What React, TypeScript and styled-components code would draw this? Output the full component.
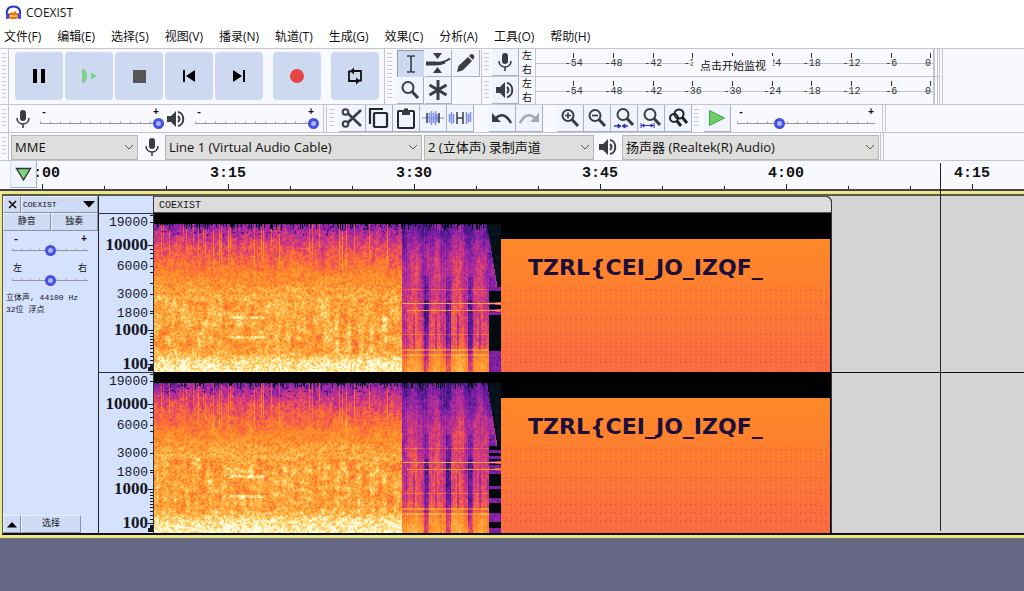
import React, { useMemo } from 'react';
import styled, { createGlobalStyle, css } from 'styled-components';

const ui = '"Open Sans", "Noto Sans CJK SC", sans-serif';
const mono = '"Liberation Mono", "Noto Sans CJK SC", monospace';

const GlobalStyle = createGlobalStyle`
  *, *::before, *::after { box-sizing: border-box; }
  body { margin: 0; background: #656685; color: #111; font-family: ${ui}; font-size: 12px; }
  button, input, select { font: inherit; color: inherit; margin: 0; padding: 0; border: 0; border-radius: 0; background: none; }
  svg { display: block; flex: none; }
`;

const TitleBar = styled.header`
  display: flex;
  align-items: center;
  gap: 4px;
  height: 25px;
  padding-left: 5px;
  background: #fff;
`;

const Title = styled.h1`
  margin: 0;
  font-size: 12px;
  font-weight: 400;
  line-height: 16px;
`;

const MenuBar = styled.nav`
  display: flex;
  gap: 16px;
  height: 23px;
  padding-left: 4px;
  background: #fff;
`;

const MenuItem = styled.button`
  font-size: 12px;
  line-height: 24px;
  white-space: nowrap;
`;

const ToolRow = styled.div<{ $h: number }>`
  display: flex;
  height: ${(p) => p.$h}px;
  border-top: 1px solid #c6c6c8;
  background: #f8f9fe;
  overflow: hidden;
`;

const Grip = styled.div<{ $line?: boolean }>`
  flex: none;
  width: 9px;
  padding: 4px 2px;
  background: repeating-linear-gradient(#c9cacd 0 1px, transparent 1px 4px) content-box;
  border-right: ${(p) => (p.$line ? '1px solid #c6c6c8' : '0')};
`;

const EndLines = styled.div`
  flex: none;
  width: 4px;
  border: solid #c6c6c8;
  border-width: 0 1px;
`;

const Transport = styled.div`
  display: flex;
  gap: 2px;
  width: 376px;
  padding: 3px 6px;
  border-right: 1px solid #c6c6c8;
`;

const BigButton = styled.button<{ $gap?: number }>`
  display: grid;
  place-items: center;
  flex: none;
  width: 48px;
  height: 48px;
  margin-left: ${(p) => p.$gap ?? 0}px;
  border-radius: 4px;
  background: #cdd9f0;
`;

const ToolGrid = styled.div`
  display: grid;
  grid-template-columns: repeat(3, 28px);
  grid-template-rows: repeat(2, 27px);
  border-right: 1px solid #c6c6c8;
`;

const IconButton = styled.button<{ $active?: boolean }>`
  display: grid;
  place-items: center;
  flex: none;
  width: 27px;
  height: 27px;
  background: ${(p) => (p.$active ? '#ccd9f1' : '#f0f4ff')};
  border: solid ${(p) => (p.$active ? '#8d97ad' : '#a9b0c0')};
  border-width: ${(p) => (p.$active ? '1px 0 0 1px' : '0 1px 1px 0')};
`;

const Meters = styled.div`
  display: grid;
  grid-template-rows: repeat(2, 28px);
  width: 457px;
`;

const MeterRow = styled.div`
  display: grid;
  grid-template-columns: 10px 27px 16px 1fr 5px;
  border-bottom: 1px solid #c6c6c8;
`;

const Channels = styled.div`
  display: grid;
  place-items: center;
  font-size: 10px;
  line-height: 13px;
`;

const MeterScale = styled.div`
  position: relative;
  display: grid;
  grid-template-columns: repeat(9, 1fr) 22px;
  padding-left: 18px;
  border-left: 1px solid #c6c6c8;
  border-right: 1px solid #c6c6c8;
  background: linear-gradient(#c2c3c8, #c2c3c8) 0 14px / 100% 1px no-repeat;
`;

const MeterMark = styled.span<{ $end?: boolean }>`
  display: flex;
  flex-direction: column;
  align-items: ${(p) => (p.$end ? 'flex-end' : 'center')};
  padding-top: 4px;
  padding-right: ${(p) => (p.$end ? '2px' : '0')};
  font: 10px/12px ${mono};
  color: #333;

  &::before {
    content: '';
    width: 1px;
    height: 5px;
    background: #333;
  }
`;

const MonitorHint = styled.button`
  position: absolute;
  left: 157px;
  top: 7px;
  width: 80px;
  height: 18px;
  background: #f8f9fe;
  font-size: 11px;
  line-height: 17px;
  white-space: nowrap;
`;

const Group = styled.div<{ $w?: number; $pad?: number }>`
  display: flex;
  align-items: center;
  width: ${(p) => (p.$w ? `${p.$w}px` : 'auto')};
  padding-left: ${(p) => p.$pad ?? 0}px;
`;

const SliderBox = styled.label<{ $w: number }>`
  display: block;
  flex: none;
  width: ${(p) => p.$w}px;
`;

const SliderEnds = styled.span`
  display: flex;
  justify-content: space-between;
  padding: 0 5px;
  font: bold 10px/10px ${mono};
`;

const Range = styled.input<{ $step: number }>`
  appearance: none;
  display: block;
  width: 100%;
  height: 11px;
  background:
    linear-gradient(#94969c, #94969c) 4px 5px / calc(100% - 8px) 1px no-repeat,
    repeating-linear-gradient(90deg, #b4b6bc 0 1px, transparent 1px ${(p) => p.$step}px) 4px 3px / calc(100% - 8px) 3px no-repeat;

  &::-webkit-slider-thumb {
    appearance: none;
    width: 11px;
    height: 11px;
    border: 3px solid #4450e0;
    border-radius: 50%;
    background: #a9b4ff;
  }
`;

const DeviceIcon = styled.span<{ $w: number }>`
  display: grid;
  place-items: center;
  flex: none;
  width: ${(p) => p.$w}px;
`;

const SelectBox = styled.label<{ $w: number }>`
  position: relative;
  flex: none;
  width: ${(p) => p.$w}px;
  height: 25px;
  margin-top: 1px;

  svg { position: absolute; right: 4px; top: 9px; pointer-events: none; }
`;

const Select = styled.select`
  appearance: none;
  width: 100%;
  height: 25px;
  padding: 0 18px 0 3px;
  background: #dededd;
  border: 1px solid #b6b6b6;
  font-size: 13px;
  line-height: 23px;
`;

const Workspace = styled.main`
  position: relative;
`;

const Ruler = styled.div`
  display: flex;
  height: 29px;
  border-top: 1px solid #c6c6c8;
  background: #f8f9fe;
`;

const RulerStub = styled.div`
  flex: none;
  width: 11px;
  border-right: 1px solid #dcdde2;
`;

const RulerButton = styled(IconButton)`
  width: 26px;
`;

const RulerScale = styled.div`
  display: flex;
  flex: 1;
  min-width: 0;
  overflow: hidden;
`;

const RulerCell = styled.span`
  flex: none;
  width: 186px;
  text-align: center;
  font: bold 15px/26px ${mono};
  background:
    linear-gradient(#222, #222) 93px 100% / 1px 5px no-repeat,
    linear-gradient(#222, #222) 31px 100% / 1px 3px no-repeat,
    linear-gradient(#222, #222) 155px 100% / 1px 3px no-repeat;

  &:first-child { margin-left: -88px; }
`;

const Playhead = styled.div`
  position: absolute;
  left: 940px;
  top: 3px;
  bottom: 8px;
  width: 1px;
  background: #222;
`;

const TrackFrame = styled.section`
  border-top: 2px solid #454545;
  border-bottom: 1px solid #77785a;
  background: #e9e88c;
  padding: 3px 0 3px 2px;
`;

const Track = styled.div`
  display: grid;
  grid-template-columns: 96px 54px minmax(0, 1fr);
  height: 341px;
  border: solid #5c5a45;
  border-width: 2px 0 0 1px;
  border-bottom: 2px solid #111;
  background: #d5d5d5;
`;

const Panel = styled.div`
  display: flex;
  flex-direction: column;
  min-height: 0;
  background: #d5e2ff;
  border-right: 1px solid #222;
`;

const PanelRow = styled.div<{ $cols: string; $h: number }>`
  display: grid;
  grid-template-columns: ${(p) => p.$cols};
  height: ${(p) => p.$h}px;
  flex: none;
`;

const bevel = css`
  background: #cfdbf5;
  border: 1px solid;
  border-color: #e8efff #8b93a5 #8b93a5 #e8efff;
`;

const PanelButton = styled.button`
  ${bevel}
  display: flex;
  align-items: center;
  justify-content: center;
  font: 9px/10px ${mono};
  white-space: nowrap;
`;

const NameButton = styled(PanelButton)`
  justify-content: space-between;
  padding: 0 2px 0 1px;
  font-size: 8px;
`;

const PanelSliders = styled.div`
  display: grid;
  gap: 7px;
  padding: 4px 0 0 5px;
`;

const SideNames = styled(SliderEnds)`
  font: 9px/12px ${mono};
`;

const TrackInfo = styled.p`
  flex: 1;
  margin: 0;
  padding: 6px 0 0 3px;
  font: 8px/12px ${mono};
  white-space: nowrap;
`;

const Axis = styled.div`
  background: #d5e2ff;
  padding-top: 17px;

  svg { overflow: visible; }
`;

const Lanes = styled.div`
  min-width: 0;
  overflow: hidden;
  background: linear-gradient(#111, #111) 0 176px / 100% 1px no-repeat;
`;

const Clip = styled.article`
  width: 679px;
  border: solid #333;
  border-width: 0 1px;
  border-radius: 0 6px 0 0;
  overflow: hidden;
  background: #000;
`;

const ClipName = styled.h2`
  margin: 0;
  height: 17px;
  padding-left: 5px;
  background: #dcdcdc;
  border-top: 1px solid #555;
  border-bottom: 1px solid #555;
  border-radius: 0 6px 0 0;
  font: 10px/18px ${mono};
`;

/* ---------- icons ---------- */

const ink = '#3b3d42';

const Logo = () => (
  <svg width="17" height="16" viewBox="0 0 17 16">
    <path d="M4 13V9l2-2 2 1 2-2 2 2 1 1v4l-2 1H6z" fill="#f06a1c" />
    <path d="M5 11h7" stroke="#ffc23a" strokeWidth="2" />
    <path d="M2 10C1 4 4 1.500 8.500 1.500S16 4 15 10" fill="none" stroke="#2436c8" strokeWidth="2" />
    <rect x="1" y="8" width="3" height="6" rx="1" fill="#3a50e8" />
    <rect x="13" y="8" width="3" height="6" rx="1" fill="#3a50e8" />
  </svg>
);

const Mic = () => (
  <svg width="16" height="20" viewBox="0 0 16 20" fill="none" stroke={ink}>
    <rect x="5" y="1" width="6" height="11" rx="3" fill={ink} stroke="none" />
    <path d="M2 9c0 8 12 8 12 0M8 15v4" strokeWidth="1.600" />
  </svg>
);

const Speaker = () => (
  <svg width="20" height="18" viewBox="0 0 20 18" fill="none" stroke={ink}>
    <path d="M1 6h4l5-5v16l-5-5H1z" fill={ink} stroke="none" />
    <path d="M12 6q3 3 0 6" strokeWidth="2" />
    <path d="M12 2c7 1 7 13 0 14" strokeWidth="2" />
  </svg>
);

const Pause = () => (
  <svg width="14" height="14"><path d="M1 0h4v14H1zM9 0h4v14H9z" fill="#000" /></svg>
);
const PlayLoop = () => (
  <svg width="18" height="16" viewBox="0 0 18 16" fill="#7bd08a">
    <path d="M2 1h2q3 2 3 7t-3 7H2z" /><path d="M11 4.500L17 8l-6 3.500z" />
  </svg>
);
const Stop = () => (
  <svg width="13" height="13"><rect width="13" height="13" fill="#555" /></svg>
);
const SkipStart = () => (
  <svg width="14" height="14"><path d="M1 1h2v12H1zM13 1v12L4 7z" fill="#000" /></svg>
);
const SkipEnd = () => (
  <svg width="14" height="14"><path d="M11 1h2v12h-2zM1 1v12l9-6z" fill="#000" /></svg>
);
const Record = () => (
  <svg width="14" height="14"><circle cx="7" cy="7" r="7" fill="#e64545" /></svg>
);
const Loop = () => (
  <svg width="16" height="18" viewBox="0 0 16 18" fill="none" stroke="#111" strokeWidth="1.800">
    <path d="M6 4h8v9.500h-2.500M10 14H2V4.500h2" />
    <path d="M7 .5v7L3 4zM9 10.500v7l4-3.500z" fill="#111" stroke="none" />
  </svg>
);
const Beam = () => (
  <svg width="12" height="20" viewBox="0 0 12 20" fill="none" stroke={ink} strokeWidth="1.600">
    <path d="M2 2h3l1 1 1-1h3M6 3v14M2 18h3l1-1 1 1h3" />
  </svg>
);
const Envelope = () => (
  <svg width="25" height="22" viewBox="0 0 25 22">
    <path d="M7 1h9l-4.500 6zM7 21h9l-4.500-6z" fill={ink} />
    <path d="M0 10.500h9q8 1 15-4M0 12.500h9q6 0 10-2" fill="none" stroke={ink} strokeWidth="2" />
  </svg>
);
const Pencil = () => (
  <svg width="20" height="20" viewBox="0 0 20 20" fill={ink}>
    <path d="M1 19l1.500-6L12 4l4 4-9.500 9.500zM13 3l1.500-1.500q1.500-1 3 .5t.5 3L17 7z" />
  </svg>
);
const Lens = ({ mark, span }: { mark?: string; span?: string }) => (
  <svg width="22" height="22" viewBox="0 0 22 22" fill="none" stroke={ink}>
    <g transform={span ? 'translate(1 -1)' : undefined}>
      <circle cx="9" cy="8.500" r="5.500" strokeWidth="2" />
      <path d="M13 12.500L19 19" strokeWidth="3" />
    </g>
    {mark && <path d={mark} strokeWidth="1.700" />}
    {span && <path d={span} stroke="#3030b8" fill="#3030b8" strokeWidth="1" />}
  </svg>
);
const ZoomToggle = () => (
  <svg width="22" height="22" viewBox="0 0 22 22" fill="none" stroke="#222">
    <circle cx="12" cy="7" r="4.500" strokeWidth="2" />
    <path d="M15 10l5 6" strokeWidth="3" />
    <circle cx="7" cy="11" r="4" strokeWidth="2" />
    <path d="M10 14l4 5" strokeWidth="3" />
  </svg>
);
const Star = () => (
  <svg width="20" height="20" viewBox="0 0 20 20" stroke={ink} strokeWidth="3">
    <path d="M10 0v20M1.500 5l17 10M18.500 5l-17 10" />
  </svg>
);
const Scissors = () => (
  <svg width="22" height="22" viewBox="0 0 22 22" fill="none" stroke={ink}>
    <circle cx="4.500" cy="5" r="2.800" strokeWidth="2" />
    <circle cx="4.500" cy="17" r="2.800" strokeWidth="2" />
    <path d="M7 6.500L20 19M7 15.500L20 3" strokeWidth="2.600" />
  </svg>
);
const Copy = () => (
  <svg width="22" height="22" viewBox="0 0 22 22" fill="none" stroke="#26282c" strokeWidth="2.200">
    <path d="M2 17V2h13" /><rect x="6" y="6" width="13" height="14" rx="1" />
  </svg>
);
const Paste = () => (
  <svg width="20" height="22" viewBox="0 0 20 22" fill="none" stroke="#26282c" strokeWidth="2">
    <rect x="2" y="4" width="16" height="17" rx="1" />
    <path d="M6 3h8v5H6z" fill={ink} stroke="none" /><path d="M8 2.500h4" />
  </svg>
);
const Trim = () => (
  <svg width="22" height="16" viewBox="0 0 22 16">
    <path d="M0 8h22" stroke="#7a86d8" strokeWidth="1" />
    <path d="M7.500 3v10M9.500 1v14M11.500 3v10M13.500 1v14M15 4v8" stroke="#7f8fea" strokeWidth="1.500" />
    <path d="M5 3v10M17 3v10" stroke={ink} strokeWidth="1.600" />
  </svg>
);
const Silence = () => (
  <svg width="24" height="16" viewBox="0 0 24 16">
    <path d="M1.500 4v8M3.500 2v12M5.500 4v9M18.500 2v12M20.500 4v8M22.500 2v10" stroke="#7f8fea" strokeWidth="1.500" />
    <path d="M9 2v12M15 2v12M9 8h6" stroke={ink} strokeWidth="1.500" fill="none" />
  </svg>
);
const Arc = ({ redo = false }: { redo?: boolean }) => (
  <svg width="22" height="14" viewBox="0 0 22 14">
    <g transform={redo ? 'matrix(-1 0 0 1 22 0)' : undefined}>
      <path d="M4 8q9-9 16 4" fill="none" stroke={redo ? '#a5a8ae' : ink} strokeWidth="2.600" />
      <path d="M1 2v9h9z" fill={redo ? '#a5a8ae' : ink} />
    </g>
  </svg>
);
const PlaySpeed = () => (
  <svg width="18" height="18" viewBox="0 0 18 18"><path d="M1.500 1.500v15L16.500 9z" fill="#69cf62" stroke="#4f9c54" /></svg>
);
const Pin = () => (
  <svg width="17" height="15" viewBox="0 0 17 15"><path d="M1.500 1.500h14L8.500 13z" fill="#7ed67c" stroke="#333" strokeWidth="1.400" /></svg>
);
const Chevron = () => (
  <svg width="10" height="7" viewBox="0 0 10 7" fill="none" stroke="#555"><path d="M1 1l4 4 4-4" /></svg>
);
const Cross = () => (
  <svg width="9" height="9" viewBox="0 0 9 9" stroke="#111" strokeWidth="1.600"><path d="M1 1l7 7M8 1L1 8" /></svg>
);
const Triangle = ({ up = false }: { up?: boolean }) => (
  <svg width="12" height="7"><path d={up ? 'M1 6.500h10L6 1z' : 'M0 0h12L6 6.500z'} fill="#000" /></svg>
);

/* ---------- controls ---------- */

type SliderProps = { w: number; name: string; value: number; step: number; sides?: boolean };

const Slider = ({ w, name, value, step, sides }: SliderProps) => (
  <SliderBox $w={w}>
    {sides ? (
      <SideNames><span>左</span><span>右</span></SideNames>
    ) : (
      <SliderEnds><span>-</span><span>+</span></SliderEnds>
    )}
    <Range type="range" aria-label={name} min={0} max={100} defaultValue={value} $step={step} />
  </SliderBox>
);

const Device = ({ w, name, value }: { w: number; name: string; value: string }) => (
  <SelectBox $w={w}>
    <Select aria-label={name} defaultValue={value}><option>{value}</option></Select>
    <Chevron />
  </SelectBox>
);

const marks = [-54, -48, -42, -36, -30, -24, -18, -12, -6, 0];

/* The hint button sits over the -30 mark, so that mark keeps only its tick. */
const Meter = ({ icon, name, hint }: { icon: React.ReactNode; name: string; hint?: string }) => (
  <MeterRow>
    <Grip />
    <IconButton aria-label={name}>{icon}</IconButton>
    <Channels><span>左</span><span>右</span></Channels>
    <MeterScale>
      {marks.map((m) => <MeterMark key={m} $end={m === 0}>{hint && m === -30 ? null : m}</MeterMark>)}
      {hint && <MonitorHint>{hint}</MonitorHint>}
    </MeterScale>
    <EndLines />
  </MeterRow>
);

/* ---------- spectrogram ---------- */

const stops: [number, number, number, number][] = [
  [0, 0, 0, 0],
  [0.12, 8, 26, 40],
  [0.25, 70, 24, 140],
  [0.38, 150, 36, 168],
  [0.5, 214, 60, 120],
  [0.6, 248, 100, 64],
  [0.72, 255, 142, 40],
  [0.84, 255, 184, 74],
  [0.93, 255, 228, 140],
  [1, 255, 252, 228],
];

const LEVELS = 40;

const levelColor = (level: number) => {
  const v = level / LEVELS;
  const i = Math.max(1, stops.findIndex((s) => s[0] >= v));
  const a = stops[i - 1];
  const b = stops[i];
  const t = (v - a[0]) / (b[0] - a[0]);
  const c = [1, 2, 3].map((k) => Math.round(a[k] + (b[k] - a[k]) * t));
  return `rgb(${c.join(',')})`;
};

const ramp = (points: [number, number][], y: number) => {
  for (let i = 1; i < points.length; i++) {
    if (y <= points[i][0]) {
      const [y0, v0] = points[i - 1];
      const [y1, v1] = points[i];
      return v0 + ((v1 - v0) * (y - y0)) / (y1 - y0);
    }
  }
  return points[points.length - 1][1];
};

const loud: [number, number][] = [[11, 0.34], [18, 0.42], [32, 0.53], [48, 0.61], [60, 0.69], [76, 0.77], [110, 0.79], [134, 0.77], [142, 0.84], [148, 0.93], [160, 0.97]];
const quiet: [number, number][] = [[11, 0.27], [30, 0.36], [50, 0.44], [80, 0.47], [100, 0.5], [126, 0.52], [138, 0.58], [146, 0.7], [160, 0.76]];

const generator = (seed: number) => {
  let s = seed;
  return () => {
    s = (s * 1664525 + 1013904223) >>> 0;
    return s / 4294967296;
  };
};

/* Value noise on a coarse lattice, in the range -0.5 to 0.5. */
const patches = (rnd: () => number, sx: number, sy: number) => {
  const cols = Math.ceil(347 / sx) + 2;
  const cells = Array.from({ length: cols * (Math.ceil(161 / sy) + 2) }, () => rnd() - 0.5);
  return (x: number, y: number) => {
    const gx = Math.floor(x / sx);
    const gy = Math.floor(y / sy);
    const tx = x / sx - gx;
    const ty = y / sy - gy;
    const at = (i: number, j: number) => cells[(gy + j) * cols + gx + i];
    return (at(0, 0) * (1 - tx) + at(1, 0) * tx) * (1 - ty) + (at(0, 1) * (1 - tx) + at(1, 1) * tx) * ty;
  };
};

const buildSpectrum = (seed: number, height: number) => {
  const shared = generator(97);
  const columns = Array.from({ length: 348 }, () => ({
    hot: shared() < 0.14 ? 0.14 : 0,
    reach: 34 + shared() * 30,
    n: shared() - 0.5,
  }));
  const rnd = generator(seed);
  const fine = patches(rnd, 1.6, 1.6);
  const wide = patches(rnd, 7, 5);
  const tall = patches(rnd, 3, 16);
  const rows = Array.from({ length: height }, () => rnd());
  const fringe = Array.from({ length: 348 }, () => (rnd() < 0.35 ? rnd() * 6 : 0));
  const paths: string[] = Array.from({ length: LEVELS + 1 }, () => '');

  for (let y = 11; y < height; y++) {
    let start = 0;
    let last = -1;
    for (let x = 0; x <= 347; x++) {
      let level = -1;
      if (x < 347) {
        const col = columns[x];
        const noise = fine(x, y);
        let v: number;
        if (x < 248) {
          v = ramp(loud, y) + noise * (y < 70 ? 0.16 : 0.26) + wide(x, y) * 0.06;
          if (y < 64) v += tall(x, y) * 0.1;
          if (y < col.reach) v += col.hot * Math.min(1, (col.reach - y) / 12);
          if (y > 85 && y < 142) v += tall(x, y) * 0.14 + wide(x, y) * 0.08;
          if (y < 11 + fringe[x]) v = 0.12;
          if (y < 24 && noise < -0.3) v -= 0.12;
          if (Math.abs(y - 84) < 3) v += 0.03;
          if (x > 74 && x < 112 && (Math.abs(y - 104) < 2 || Math.abs(y - 124) < 2)) v += 0.12;
          if (x > 160 && y > 100 && y < 140) v += x % 12 < 5 ? 0.04 : -0.02;
        } else {
          const phase = (x - 248) % 22;
          v = ramp(quiet, y) + noise * 0.13 + col.n * 0.07 + tall(x, y) * 0.1;
          v += Math.sin(((x - 254) / 22) * Math.PI * 2) * 0.05;
          if (y > 62 && x > 262 && phase < 5) v -= y > 86 ? 0.17 : 0.08;
          if (y > 100 && y < 138 && phase > 10 && phase < 13) v -= 0.1;
          if (Math.abs(y - 90) < 1) v = 0.8 + noise * 0.15;
          if (Math.abs(y - 97) < 1 && x > 252) v = 0.74 + noise * 0.25;
          if (y === 76 || y === 121) v += 0.12;
          if (y === 137 || y === 136) v += 0.18;
          if (y === 141 || y === 142) v += 0.14;
          const edge = 333 + Math.max(0, y - 14) / 6;
          if (x > (y < 74 ? edge : 334)) {
            if (y < 74) v = 0.08 + noise * 0.08;
            else if (Math.abs(y - 90) > 1 && Math.abs(y - 97) > 1) {
              v = rows[Math.floor(y / 3)] > 0.5 || (y > 104 && y < 132 && y % 14 > 4) ? 0.05 : 0.34 + noise * 0.1;
            }
          }
          if (y < 11 + fringe[x]) v = 0.08;
        }
        level = Math.round(Math.max(0, Math.min(1, v)) * LEVELS);
      }
      if (level !== last) {
        if (last > 0) paths[last] += `M${start} ${y}h${x - start}v1h${start - x}z`;
        start = x;
        last = level;
      }
    }
  }
  return paths;
};

const rippleRows = [76, 88, 105, 118, 130, 138, 146];

const Spectrogram = ({ id, seed, height }: { id: string; seed: number; height: number }) => {
  const paths = useMemo(() => buildSpectrum(seed, height), [seed, height]);
  return (
    <svg width="677" height={height} role="img" aria-label="频谱图">
      <defs>
        <linearGradient id={`${id}-tone`} x1="0" y1="0" x2="0" y2="1">
          <stop offset="0" stopColor="#ff8828" />
          <stop offset="0.4" stopColor="#ff7f2f" />
          <stop offset="1" stopColor="#fa6c42" />
        </linearGradient>
        <pattern id={`${id}-ripple`} width="5" height="4" patternUnits="userSpaceOnUse">
          <path d="M1 0l2 3" stroke="#c8325e" strokeWidth="1" />
        </pattern>
      </defs>
      <rect width="677" height={height} fill="#000" />
      <g shapeRendering="crispEdges">
        {paths.map((d, i) => d && <path key={i} d={d} fill={levelColor(i)} />)}
      </g>
      <rect x="347" y="26" width="329" height={height - 26} fill={`url(#${id}-tone)`} />
      <rect x="347" y="70" width="329" height={height - 70} fill={`url(#${id}-ripple)`} opacity="0.18" />
      {rippleRows.map((y, i) => (
        <rect key={y} x="347" y={y} width="329" height="4" fill={`url(#${id}-ripple)`} opacity={0.25 + i * 0.04} />
      ))}
      <text x="374" y="62" fontFamily='"DejaVu Sans", sans-serif' fontWeight="700" fontSize="22" fill="#1c0f3c">TZRL{'{'}CEI_JO_IZQF_</text>
    </svg>
  );
};

const freqs: [string, number, boolean][] = [
  ['19000', 9, false], ['10000', 32, true], ['6000', 53, false], ['3000', 81, false],
  ['1800', 100, false], ['1000', 117, true], ['100', 151, true],
];
const minorTicks = [2, 36, 40, 45, 59, 70, 98, 120, 123, 126, 129, 132, 135, 139, 143, 147];

const FrequencyAxis = ({ height }: { height: number }) => (
  <svg width="54" height={height} fill="#15171c">
    <rect width="54" height="1" fill="#333" />
    {minorTicks.map((y) => <rect key={y} x="51" y={y} width="3" height="1" />)}
    {freqs.map(([label, y, bold]) => (
      <g key={label}>
        <rect x={bold ? 49 : 51} y={y} width={bold ? 5 : 3} height="1" />
        <text
          x="49"
          y={bold ? y + 5 : y + 4}
          textAnchor="end"
          fontFamily={bold ? '"Liberation Serif", serif' : '"Liberation Mono", monospace'}
          fontSize={bold ? 17 : 13}
          fontWeight={bold ? 700 : 400}
        >
          {label}
        </text>
      </g>
    ))}
    <path d={`M54 ${height - 8}h-3v3h-2v4h5z`} />
  </svg>
);

const menus = ['文件(F)', '编辑(E)', '选择(S)', '视图(V)', '播录(N)', '轨道(T)', '生成(G)', '效果(C)', '分析(A)', '工具(O)', '帮助(H)'];
const times = ['3:00', '3:15', '3:30', '3:45', '4:00', '4:15'];

export default function App() {
  return (
    <>
      <GlobalStyle />
      <TitleBar><Logo /><Title>COEXIST</Title></TitleBar>
      <MenuBar>{menus.map((m) => <MenuItem key={m}>{m}</MenuItem>)}</MenuBar>

      <ToolRow $h={56}>
        <Grip $line />
        <Transport>
          <BigButton aria-label="暂停"><Pause /></BigButton>
          <BigButton aria-label="播放"><PlayLoop /></BigButton>
          <BigButton aria-label="停止"><Stop /></BigButton>
          <BigButton aria-label="跳至开头"><SkipStart /></BigButton>
          <BigButton aria-label="跳至结尾"><SkipEnd /></BigButton>
          <BigButton aria-label="录制" $gap={8}><Record /></BigButton>
          <BigButton aria-label="循环" $gap={8}><Loop /></BigButton>
        </Transport>
        <Grip />
        <Group $pad={3}>
          <ToolGrid>
            <IconButton aria-label="选择工具" $active><Beam /></IconButton>
            <IconButton aria-label="包络工具"><Envelope /></IconButton>
            <IconButton aria-label="绘制工具"><Pencil /></IconButton>
            <IconButton aria-label="缩放工具"><Lens /></IconButton>
            <IconButton aria-label="多功能工具"><Star /></IconButton>
          </ToolGrid>
        </Group>
        <Meters>
          <Meter icon={<Mic />} name="录制电平" hint="点击开始监视" />
          <Meter icon={<Speaker />} name="播放电平" />
        </Meters>
        <EndLines />
      </ToolRow>

      <ToolRow $h={28}>
        <Grip $line />
        <Group $w={314} $pad={5}>
          <DeviceIcon $w={18}><Mic /></DeviceIcon>
          <Group $pad={4}><Slider w={128} name="录制音量" value={100} step={10} /></Group>
          <DeviceIcon $w={24}><Speaker /></DeviceIcon>
          <Group $pad={3}><Slider w={128} name="播放音量" value={100} step={10} /></Group>
        </Group>
        <EndLines />
        <Grip />
        <Group $pad={3}>
          <IconButton aria-label="剪切"><Scissors /></IconButton>
          <IconButton aria-label="复制"><Copy /></IconButton>
          <IconButton aria-label="粘贴"><Paste /></IconButton>
          <IconButton aria-label="修剪"><Trim /></IconButton>
          <IconButton aria-label="静音所选"><Silence /></IconButton>
        </Group>
        <Group $pad={15}>
          <IconButton aria-label="撤销"><Arc /></IconButton>
          <IconButton aria-label="重做"><Arc redo /></IconButton>
        </Group>
        <Group $pad={14}>
          <IconButton aria-label="放大"><Lens mark="M6 8.500h6M9 5.500v6" /></IconButton>
          <IconButton aria-label="缩小"><Lens mark="M6 8.500h6" /></IconButton>
          <IconButton aria-label="适应选区"><Lens span="M1 19h4V17l3 2-3 2v-2zM15 19h-3v-2l-3 2 3 2v-2z" /></IconButton>
          <IconButton aria-label="适应宽度"><Lens span="M1 16v5M14 16v5M1 18.500h13M4 17v3l-2-1.500zM11 17v3l2-1.500z" /></IconButton>
          <IconButton aria-label="切换缩放"><ZoomToggle /></IconButton>
        </Group>
        <Grip />
        <Group $w={181} $pad={3}>
          <IconButton aria-label="以指定速度播放"><PlaySpeed /></IconButton>
          <Group $pad={2}><Slider w={146} name="播放速度" value={30} step={10} /></Group>
        </Group>
        <EndLines />
      </ToolRow>

      <ToolRow $h={28}>
        <Grip $line />
        <Group $pad={2}>
          <Device w={127} name="音频主机" value="MME" />
          <DeviceIcon $w={27}><Mic /></DeviceIcon>
          <Device w={257} name="录制设备" value="Line 1 (Virtual Audio Cable)" />
          <Group $pad={2}><Device w={170} name="录制声道" value="2 (立体声) 录制声道" /></Group>
          <DeviceIcon $w={28}><Speaker /></DeviceIcon>
          <Device w={257} name="播放设备" value="扬声器 (Realtek(R) Audio)" />
        </Group>
        <Group $pad={1} />
        <EndLines />
      </ToolRow>

      <Workspace>
        <Ruler>
          <RulerStub />
          <RulerButton aria-label="固定播放头"><Pin /></RulerButton>
          <RulerScale>{times.map((t) => <RulerCell key={t}>{t}</RulerCell>)}</RulerScale>
        </Ruler>
        <TrackFrame>
          <Track>
            <Panel>
              <PanelRow $cols="18px 1fr" $h={17}>
                <PanelButton aria-label="关闭"><Cross /></PanelButton>
                <NameButton>COEXIST <Triangle /></NameButton>
              </PanelRow>
              <PanelRow $cols="1fr 1fr" $h={18}>
                <PanelButton>静音</PanelButton>
                <PanelButton>独奏</PanelButton>
              </PanelRow>
              <PanelSliders>
                <Slider w={84} name="增益" value={50} step={9} />
                <Slider w={84} name="声像" value={50} step={9} sides />
              </PanelSliders>
              <TrackInfo>立体声, 44100 Hz<br />32位 浮点</TrackInfo>
              <PanelRow $cols="18px 60px" $h={18}>
                <PanelButton aria-label="折叠"><Triangle up /></PanelButton>
                <PanelButton>选择</PanelButton>
              </PanelRow>
            </Panel>
            <Axis>
              <FrequencyAxis height={159} />
              <FrequencyAxis height={161} />
            </Axis>
            <Lanes>
              <Clip>
                <ClipName>COEXIST</ClipName>
                <Spectrogram id="left" seed={71} height={159} />
                <Spectrogram id="right" seed={1309} height={161} />
              </Clip>
            </Lanes>
          </Track>
        </TrackFrame>
        <Playhead />
      </Workspace>
    </>
  );
}
